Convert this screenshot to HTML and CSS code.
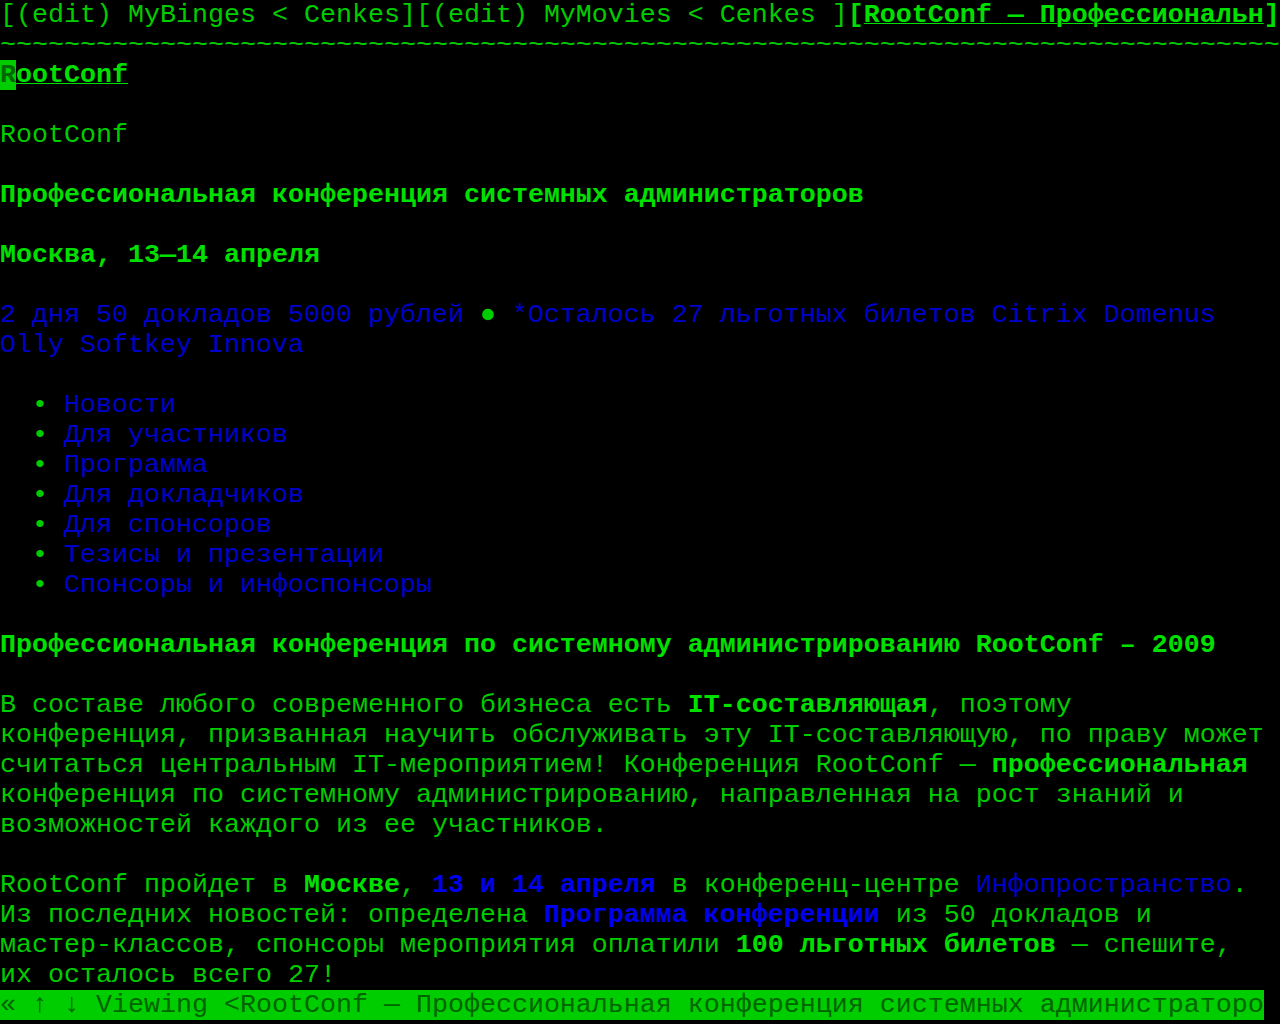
FILE: index.html
```html
<!DOCTYPE html>
<html lang="ru">
<head>
<meta charset="utf-8">
<title>RootConf — Профессиональная конференция системных администраторов</title>
<link rel="stylesheet" href="styles.css">
</head>
<body>
<div class="term">
<div class="row">[(edit) MyBinges &lt; Cenkes][(edit) MyMovies &lt; Cenkes ]<b class="b">[<u>RootConf — Профессиональн</u>]</b></div>
<div class="row">~~~~~~~~~~~~~~~~~~~~~~~~~~~~~~~~~~~~~~~~~~~~~~~~~~~~~~~~~~~~~~~~~~~~~~~~~~~~~~~~</div>
<div class="row"><b class="b"><u><span class="cursor">R</span>ootConf</u></b></div>
<div class="row"> </div>
<div class="row">RootConf</div>
<div class="row"> </div>
<div class="row"><b class="b">Профессиональная конференция системных администраторов</b></div>
<div class="row"> </div>
<div class="row"><b class="b">Москва, 13—14 апреля</b></div>
<div class="row"> </div>
<div class="row"><span class="link">2 дня 50 докладов 5000 рублей </span><span class="dot">●</span><span class="link"> *Осталось 27 льготных билетов Citrix Domenus</span></div>
<div class="row"><span class="link">Olly Softkey Innova</span></div>
<div class="row"> </div>
<div class="row">  <span class="bul">•</span> <span class="link">Новости</span></div>
<div class="row">  <span class="bul">•</span> <span class="link">Для участников</span></div>
<div class="row">  <span class="bul">•</span> <span class="link">Программа</span></div>
<div class="row">  <span class="bul">•</span> <span class="link">Для докладчиков</span></div>
<div class="row">  <span class="bul">•</span> <span class="link">Для спонсоров</span></div>
<div class="row">  <span class="bul">•</span> <span class="link">Тезисы и презентации</span></div>
<div class="row">  <span class="bul">•</span> <span class="link">Спонсоры и инфоспонсоры</span></div>
<div class="row"> </div>
<div class="row"><b class="b">Профессиональная конференция по системному администрированию RootConf – 2009</b></div>
<div class="row"> </div>
<div class="row">В составе любого современного бизнеса есть <b class="b">IT-составляющая</b>, поэтому</div>
<div class="row">конференция, призванная научить обслуживать эту IT-составляющую, по праву может</div>
<div class="row">считаться центральным IT-мероприятием! Конференция RootConf — <b class="b">профессиональная</b></div>
<div class="row">конференция по системному администрированию, направленная на рост знаний и</div>
<div class="row">возможностей каждого из ее участников.</div>
<div class="row"> </div>
<div class="row">RootConf пройдет в <b class="b">Москве</b>, <b class="blink">13 и 14 апреля</b> в конференц-центре <span class="link">Инфопространство</span>.</div>
<div class="row">Из последних новостей: определена <b class="blink">Программа конференции</b> из 50 докладов и</div>
<div class="row">мастер-классов, спонсоры мероприятия оплатили <b class="b">100 льготных билетов</b> — спешите,</div>
<div class="row">их осталось всего 27!</div>
<div class="row status"><span class="statbar">« ↑ ↓ Viewing &lt;RootConf — Профессиональная конференция системных администраторо</span></div>
</div>
</body>
</html>
```
FILE: styles.css
```css
html, body {
  margin: 0;
  padding: 0;
  background: #000;
}
body {
  width: 1280px;
  height: 1024px;
  overflow: hidden;
}
.term {
  font-family: "Liberation Mono", "DejaVu Sans Mono", monospace;
  font-size: 26.66px;
  line-height: 30px;
  color: #00cd00;
  display: flex;
  flex-direction: column;
}
.row {
  height: 30px;
  overflow: hidden;
  white-space: pre;
}
.b {
  font-weight: bold;
  color: #00e000;
}
u {
  text-decoration: underline;
  text-underline-offset: 1px;
  text-decoration-thickness: 1px;
}
.cursor {
  display: inline-block;
  width: 16px;
  background: #00cd00;
  color: #006a00;
}
.link {
  color: #0000cd;
}
.blink {
  font-weight: bold;
  color: #0000ee;
}
.dot {
  display: inline-block;
  width: 16px;
  text-align: center;
  color: #00cd00;
}
.bul {
  color: #00cd00;
}
.statbar {
  display: inline-block;
  width: 1264px;
  height: 30px;
  background: #00cd00;
  color: #006400;
}
```
